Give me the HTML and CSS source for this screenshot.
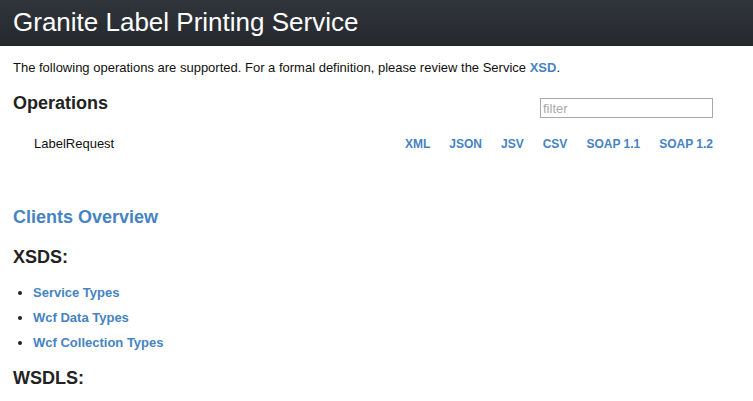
FILE: index.html
```html
<!DOCTYPE html>
<html>
<head>
<meta charset="utf-8">
<link rel="stylesheet" href="styles.css">
</head>
<body>
<h1 class="title">Granite Label Printing Service</h1>
<div class="content">
  <p class="intro">The following operations are supported. For a formal definition, please review the Service <a href="#" class="link">XSD</a>.</p>
  <div class="ops-head">
    <h2 class="h2">Operations</h2>
    <input class="filter" type="text" placeholder="filter">
  </div>
  <div class="op-row">
    <span class="op-name">LabelRequest</span>
    <div class="formats">
      <a href="#" class="link">XML</a>
      <a href="#" class="link">JSON</a>
      <a href="#" class="link">JSV</a>
      <a href="#" class="link">CSV</a>
      <a href="#" class="link">SOAP 1.1</a>
      <a href="#" class="link">SOAP 1.2</a>
    </div>
  </div>
  <h2 class="h2 clients"><a href="#" class="link">Clients Overview</a></h2>
  <h2 class="h2 xsds">XSDS:</h2>
  <ul class="list">
    <li><a href="#" class="link">Service Types</a></li>
    <li><a href="#" class="link">Wcf Data Types</a></li>
    <li><a href="#" class="link">Wcf Collection Types</a></li>
  </ul>
  <h2 class="h2 wsdls">WSDLS:</h2>
</div>
</body>
</html>
```
FILE: styles.css
```css
html, body { margin: 0; padding: 0; background: #fff; }
body { font-family: "Liberation Sans", Arial, sans-serif; color: #222; }
.title {
  margin: 0;
  height: 46px;
  line-height: 44px;
  padding: 0 13px;
  background: linear-gradient(#30353b, #25292e);
  color: #fff;
  font-size: 26px;
  font-weight: normal;
}
.content { padding: 0 13px; }
.link { color: #4683c3; font-weight: bold; text-decoration: none; }
.intro { margin: 14px 0 0; font-size: 13px; line-height: 16px; color: #111; }
.ops-head { display: flex; justify-content: space-between; align-items: flex-start; margin-top: 17px; width: 700px; }
.h2 { margin: 0; font-size: 18px; font-weight: bold; color: #222; line-height: 22px; }
.ops-head .h2 { line-height: 20px; }
.filter {
  width: 167px; height: 16px; padding: 1px 2px; margin: 5px 0 0;
  border: 1px solid #a9a9a9; font-family: "Liberation Sans", Arial, sans-serif; font-size: 13px;
}
.filter::placeholder { color: #aaa; }
.op-row { display: flex; justify-content: space-between; align-items: center; width: 700px; margin-top: 18px; font-size: 13px; line-height: 16px; }
.op-name { padding-left: 21px; color: #111; }
.formats { display: flex; font-size: 12px; }
.formats .link { margin-left: 19px; }
.clients { margin-top: 54px; }
.xsds { margin-top: 18px; }
.list { margin: 12px 0 0; padding-left: 20px; font-size: 13px; }
.list li { line-height: 25px; }
.wsdls { margin-top: 12px; }
```
